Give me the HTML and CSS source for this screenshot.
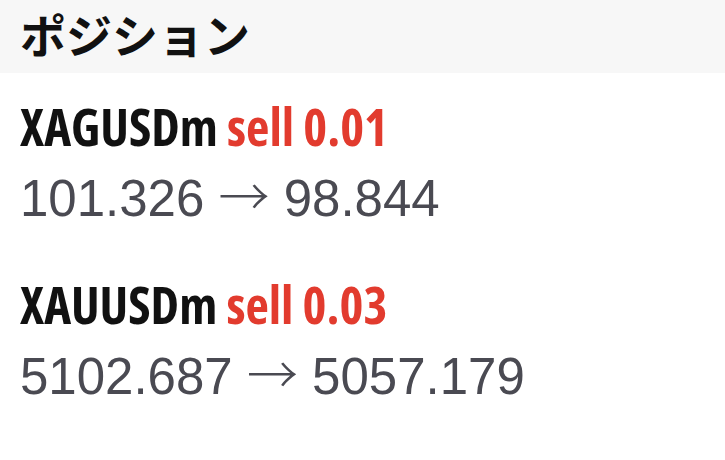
FILE: index.html
```html
<!DOCTYPE html>
<html lang="ja">
<head>
  <meta charset="UTF-8">
  <meta name="viewport" content="width=device-width, initial-scale=1.0">
  <title>ポジション</title>
  <link rel="stylesheet" href="styles.css">
</head>
<body>
  <div class="header">ポジション</div>

  <div class="position">
    <div class="symbol">XAGUSDm <span class="side">sell 0.01</span></div>
    <div class="prices">101.326 <span class="arrow">→</span> 98.844</div>
  </div>

  <div class="position">
    <div class="symbol">XAUUSDm <span class="side">sell 0.03</span></div>
    <div class="prices">5102.687 <span class="arrow">→</span> 5057.179</div>
  </div>
</body>
</html>
```

FILE: styles.css
```css
body {
  margin: 0;
  background-color: #fff;
  font-family: "Liberation Sans", Arial, sans-serif;
}

.header {
  background-color: #f7f7f7;
  height: 73px;
  box-sizing: border-box;
  padding: 0 20px;
  font-family: "Noto Sans CJK JP", sans-serif;
  font-weight: bold;
  font-size: 46px;
  line-height: 66px;
  color: #111;
}

.position {
  padding: 19px 20px 18px;
}

.symbol {
  font-family: "Open Sans", sans-serif;
  font-stretch: 75%;
  font-weight: bold;
  font-size: 51px;
  line-height: 68px;
  color: #111;
}

.side {
  color: #e23b2e;
}

.prices {
  font-size: 51px;
  line-height: 68px;
  color: #4a4a52;
}

.arrow {
  font-family: "Noto Sans CJK JP", sans-serif;
  font-weight: 300;
}
```
